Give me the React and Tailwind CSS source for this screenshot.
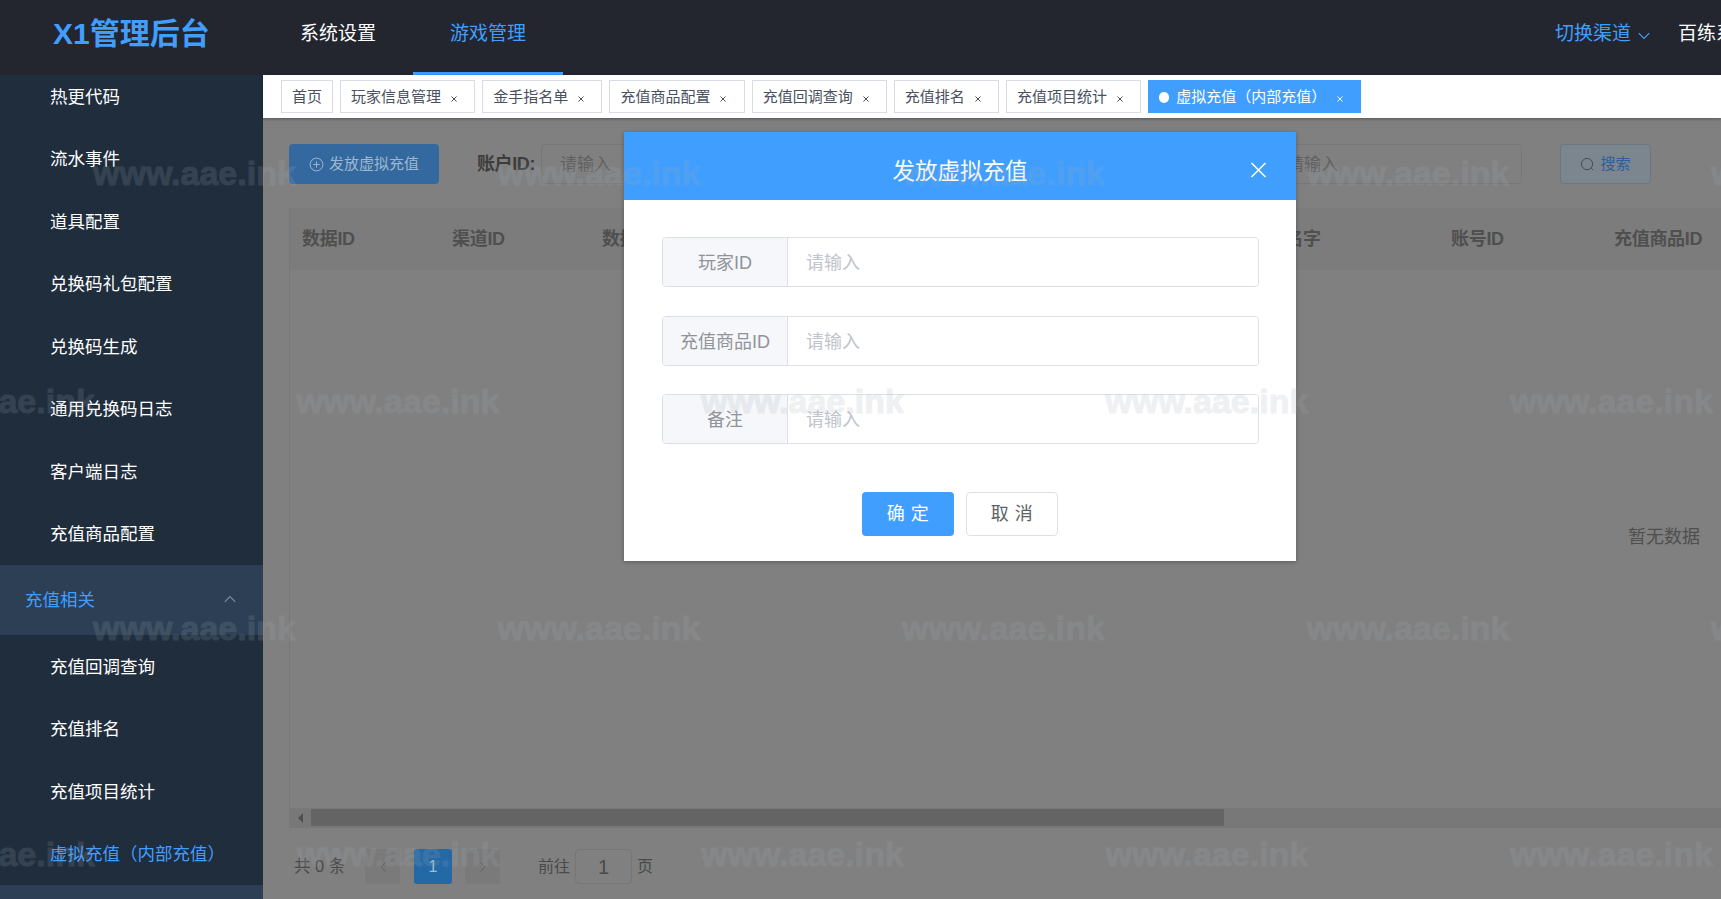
import React from "react";

const sideTop = ["热更代码", "流水事件", "道具配置", "兑换码礼包配置", "兑换码生成", "通用兑换码日志", "客户端日志", "充值商品配置"];
const sideSub = ["充值回调查询", "充值排名", "充值项目统计"];
const tabs = ["玩家信息管理", "金手指名单", "充值商品配置", "充值回调查询", "充值排名", "充值项目统计"];
const marks = [
  { y: 155, x: 93 },
  { y: 383, x: -108 },
  { y: 610, x: 93 },
  { y: 836, x: -108 },
];

function Cross({ className }) {
  return (
    <svg viewBox="0 0 10 10" className={className} fill="none" stroke="currentColor" strokeWidth="1">
      <path d="M2.5 2.5 L7.5 7.5 M7.5 2.5 L2.5 7.5" />
    </svg>
  );
}

function SideItem({ label, active }) {
  return (
    <div className={`h-[62.5px] shrink-0 flex items-center pl-[50px] pt-[1px] text-[17.5px] ${active ? "text-[#409eff]" : "text-white"}`}>
      {label}
    </div>
  );
}

function Chevron({ up, className }) {
  return (
    <svg viewBox="0 0 12 12" className={className} fill="none" stroke="currentColor" strokeWidth="1">
      <path d={up ? "M1.5 8.5 L6 4 L10.5 8.5" : "M1.5 3.5 L6 8 L10.5 3.5"} />
    </svg>
  );
}

function Tab({ label }) {
  return (
    <div className="h-[33px] border border-[#d8dce5] bg-white flex items-center pl-[10px] pr-[15.2px] pt-[1px] text-[15px] text-[#495060] shrink-0">
      <span>{label}</span>
      <Cross className="w-[10px] h-[10px] ml-[8px] mt-[3px] text-[#495060]" />
    </div>
  );
}

function Field({ label, mb }) {
  return (
    <div className={`h-[50px] flex border border-[#dcdfe6] rounded-[4px] text-[18px] overflow-hidden ${mb}`}>
      <div className="w-[125px] pt-[2px] bg-[#f5f7fa] border-r border-[#dcdfe6] flex items-center justify-center text-[#909399] shrink-0">
        {label}
      </div>
      <div className="flex-1 flex items-center pl-[18px] pt-[2px] text-[#c0c4cc] bg-white">请输入</div>
    </div>
  );
}

export default function App() {
  return (
    <div
      className="relative w-[1721px] h-[899px] overflow-hidden flex flex-col bg-[#808080]"
      style={{ fontFamily: '"Liberation Sans", "Noto Sans CJK SC", sans-serif' }}
    >
      <header className="h-[75px] shrink-0 bg-[#23262f] flex items-stretch whitespace-nowrap">
        <div className="w-[263px] pl-[53px] shrink-0 flex items-center pb-[9px] text-[30px] font-bold text-[#409eff]">X1管理后台</div>
        <div className="w-[150px] shrink-0 flex items-center justify-center pb-[7px] text-[19px] text-white">系统设置</div>
        <div className="w-[150px] shrink-0 flex items-center justify-center pb-[4px] text-[19px] text-[#409eff] border-b-[3px] border-[#409eff]">游戏管理</div>
        <div className="ml-[992px] shrink-0 flex items-center pb-[7px] text-[19px] text-[#409eff]">
          切换渠道
          <Chevron className="w-[14px] h-[14px] ml-[6px] mt-[3px] text-[#409eff]" />
        </div>
        <div className="ml-[27px] shrink-0 flex items-center pb-[7px] text-[19px] text-white">百练系统</div>
      </header>

      <div className="flex-1 flex min-h-0">
        <aside className="w-[263px] shrink-0 bg-[#1f2d3d] overflow-hidden flex flex-col">
          <div className="-mt-[10px] flex flex-col shrink-0">
            {sideTop.map((s) => (
              <SideItem key={s} label={s} />
            ))}
          </div>
          <div className="h-[70px] shrink-0 pt-[1px] bg-[#2c3f55] flex items-center justify-between pl-[25px] pr-[26px] text-[17.5px] text-[#409eff]">
            <span>充值相关</span>
            <Chevron up className="w-[14px] h-[14px] -mt-[4px] text-[#7f8c9a]" />
          </div>
          {sideSub.map((s) => (
            <SideItem key={s} label={s} />
          ))}
          <SideItem label="虚拟充值（内部充值）" active />
          <div className="flex-1 bg-[#2c3f55]" />
        </aside>

        <main className="flex-1 min-w-0 flex flex-col">
          <div className="h-[43px] shrink-0 bg-white flex items-center gap-[7px] pl-[18px] shadow-[0_1px_3px_rgba(0,0,0,0.35)] z-10 whitespace-nowrap">
            <div className="h-[33px] border border-[#d8dce5] flex items-center px-[10px] pt-[1px] text-[15px] text-[#495060] shrink-0">首页</div>
            {tabs.map((t) => (
              <Tab key={t} label={t} />
            ))}
            <div className="h-[33px] bg-[#409eff] text-white flex items-center pl-[11px] pr-[16px] pt-[1px] text-[15px] shrink-0">
              <span className="w-[10px] h-[11px] rounded-full bg-white mr-[7px]" />
              <span>虚拟充值（内部充值）</span>
              <Cross className="w-[10px] h-[10px] ml-[9px] mt-[3px]" />
            </div>
          </div>

          <div className="flex-1 min-h-0 flex flex-col bg-[#808080] overflow-hidden pt-[26px] pl-[26px] whitespace-nowrap">
            <div className="h-[40px] shrink-0 flex items-center pr-[70px]">
              <div className="w-[150px] h-[40px] rounded-[4px] bg-[#33699f] text-[#9fb8d0] text-[15px] flex items-center justify-center gap-[5px]">
                <svg viewBox="0 0 16 16" className="w-[15px] h-[15px]" fill="none" stroke="currentColor" strokeWidth="1">
                  <circle cx="8" cy="8" r="6.8" />
                  <path d="M8 4.5 V11.5 M4.5 8 H11.5" />
                </svg>
                发放虚拟充值
              </div>
              <span className="ml-[38px] text-[18px] font-bold text-[#3d3d3d] tracking-[-0.4px]">账户ID:</span>
              <div className="ml-[6px] w-[256px] h-[40px] border border-[#767676] rounded-[4px] flex items-center pl-[18px] pt-[1px] text-[17px] text-[#616161]">请输入</div>
              <div className="ml-auto w-[256px] h-[40px] border border-[#767676] rounded-[4px] flex items-center pl-[20px] pt-[1px] text-[17px] text-[#616161]">请输入</div>
              <div className="ml-[38px] w-[91px] h-[40px] border border-[#6a7682] bg-[#7c868f] rounded-[4px] flex items-center justify-center gap-[5px] text-[15px] text-[#2e5f9a]">
                <svg viewBox="0 0 16 16" className="w-[15px] h-[15px] text-[#3e4a58]" fill="none" stroke="currentColor" strokeWidth="1">
                  <circle cx="7.5" cy="7.5" r="6" />
                  <path d="M12 12 L14 14" />
                </svg>
                搜索
              </div>
            </div>

            <div className="mt-[24px] flex-1 min-h-0 flex flex-col border-l border-[#787878]">
              <div className="h-[62px] shrink-0 bg-[#7c7c7c] flex items-center text-[18px] font-bold text-[#4f4f4f] tracking-[-0.3px]">
                <div className="w-[150px] pl-[12px] shrink-0">数据ID</div>
                <div className="w-[150px] pl-[12px] shrink-0">渠道ID</div>
                <div className="w-[648px] pl-[12px] shrink-0">数据时间</div>
                <div className="w-[201px] pl-[12px] shrink-0">玩家名字</div>
                <div className="w-[163px] pl-[12px] shrink-0">账号ID</div>
                <div className="pl-[12px] shrink-0">充值商品ID</div>
              </div>
              <div className="flex-1 flex items-center justify-end pr-[21px] pb-[4px] text-[18px] text-[#4f4f4f]">暂无数据</div>
              <div className="h-[20px] shrink-0 bg-[#787878] flex items-start pt-[1px]">
                <div className="w-[21px] h-[17px] flex items-center justify-center">
                  <span className="w-0 h-0 border-y-[5px] border-y-transparent border-r-[5px] border-r-[#4f4f4f]" />
                </div>
                <div className="w-[913px] h-[17px] bg-[#646464]" />
              </div>
            </div>

            <div className="mt-[21px] mb-[15px] h-[35px] shrink-0 flex items-center text-[16.5px] text-[#4a4a4a]">
              <span className="ml-[5px] w-[71px] shrink-0">共 0 条</span>
              <div className="w-[35px] h-[35px] rounded-[2px] bg-[#7a7a7a] text-[#606060] flex items-center justify-center">
                <Chevron className="w-[12px] h-[12px] rotate-90" />
              </div>
              <div className="ml-[14px] w-[38px] h-[35px] rounded-[3px] bg-[#2369a6] text-[#9fbcd6] flex items-center justify-center text-[16px]">1</div>
              <div className="ml-[13px] w-[35px] h-[35px] rounded-[2px] bg-[#7a7a7a] text-[#606060] flex items-center justify-center">
                <Chevron className="w-[12px] h-[12px] -rotate-90" />
              </div>
              <span className="ml-[38px] text-[16px]">前往</span>
              <div className="ml-[5px] w-[57px] h-[35px] border border-[#767676] rounded-[4px] flex items-center justify-center text-[20px] text-[#4a4a4a]">1</div>
              <span className="ml-[5px] text-[16px]">页</span>
            </div>
          </div>
        </main>
      </div>

      <div className="absolute left-[624px] top-[132px] w-[672px] bg-white flex flex-col shadow-[0_1px_4px_rgba(0,0,0,0.3)] z-20">
        <div className="relative h-[68px] pt-[12px] bg-[#409eff] flex items-center justify-center text-[22.5px] text-white">
          发放虚拟充值
          <svg viewBox="0 0 16 16" className="absolute right-[29px] top-[30px] w-[17px] h-[16px]" fill="none" stroke="currentColor" strokeWidth="1.5">
            <path d="M1 1 L15 15 M15 1 L1 15" />
          </svg>
        </div>
        <div className="pl-[38px] pr-[37px] pt-[37px] pb-[25px] flex flex-col">
          <Field label="玩家ID" mb="mb-[29px]" />
          <Field label="充值商品ID" mb="mb-[28px]" />
          <Field label="备注" />
          <div className="mt-[48px] flex justify-center gap-[12px] pr-[1px]">
            <div className="w-[92px] h-[44px] rounded-[4px] bg-[#409eff] text-white text-[18px] tracking-[0.5px] flex items-center justify-center">确 定</div>
            <div className="w-[92px] h-[44px] rounded-[4px] border border-[#dcdfe6] bg-white text-[#606266] text-[18px] tracking-[0.5px] flex items-center justify-center">取 消</div>
          </div>
        </div>
      </div>

      <div className="absolute inset-0 pointer-events-none overflow-hidden z-30">
        {marks.map((m) =>
          [0, 1, 2, 3, 4].map((i) => (
            <span
              key={`${m.y}-${i}`}
              className="absolute text-[34px] leading-[36px] font-bold text-[#a0aab4] opacity-[0.17] [-webkit-text-stroke:1px_#a0aab4] whitespace-nowrap"
              style={{ left: m.x + i * 404.5, top: m.y }}
            >
              www.aae.ink
            </span>
          ))
        )}
      </div>
    </div>
  );
}
